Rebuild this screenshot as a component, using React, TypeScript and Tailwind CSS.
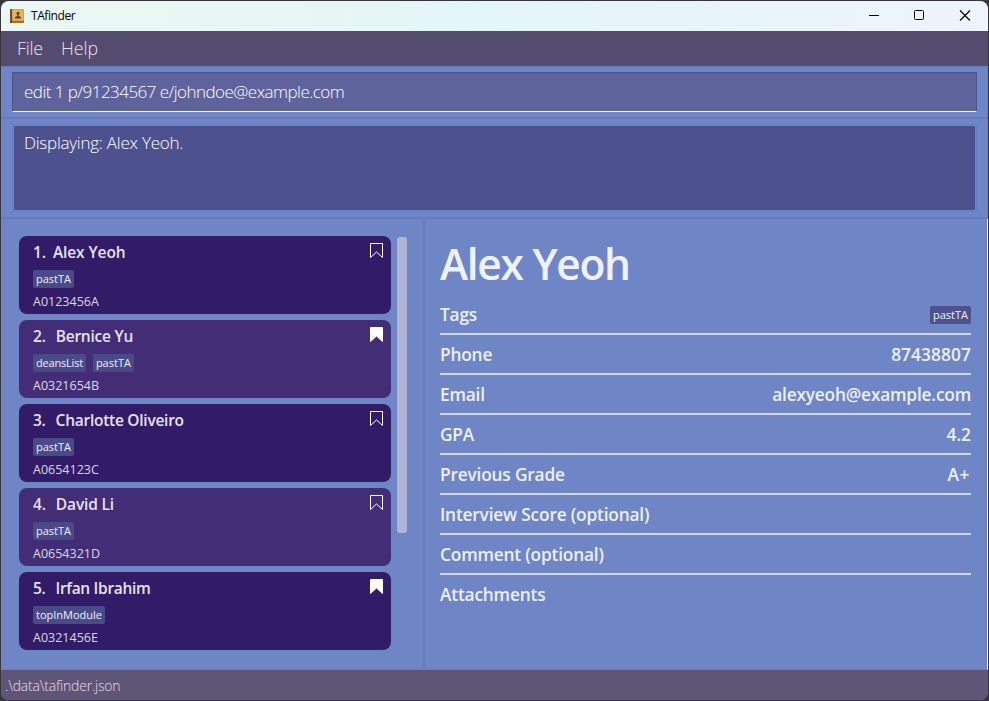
import type { ReactNode } from "react";

type Person = { name: string; tags: string[]; id: string; saved: boolean; spacing: string };

const people: Person[] = [
  { name: "Alex Yeoh", tags: ["pastTA"], id: "A0123456A", saved: false, spacing: "gap-[7px] tracking-[-0.1px]" },
  { name: "Bernice Yu", tags: ["deansList", "pastTA"], id: "A0321654B", saved: true, spacing: "gap-[10px] tracking-[-0.22px]" },
  { name: "Charlotte Oliveiro", tags: ["pastTA"], id: "A0654123C", saved: false, spacing: "gap-[10px] tracking-[-0.26px]" },
  { name: "David Li", tags: ["pastTA"], id: "A0654321D", saved: false, spacing: "gap-[10px] tracking-[-0.15px]" },
  { name: "Irfan Ibrahim", tags: ["topInModule"], id: "A0321456E", saved: true, spacing: "gap-[10px] tracking-[-0.3px]" },
];

function Tag({ children, className }: { children: ReactNode; className: string }) {
  return (
    <span className={`flex h-[18px] items-center rounded-[2px] px-[3px] pb-px text-[11px] leading-none text-[#f1eff7] ${className}`}>
      {children}
    </span>
  );
}

function Bookmark({ filled }: { filled: boolean }) {
  return (
    <svg width="14" height="16" viewBox="0 0 14 16" className="mt-[7px] mr-[7px] shrink-0">
      <path d="M0.5 0.5H12.5V14.5L6.5 9L0.5 14.5Z" fill={filled ? "white" : "none"} stroke="white" strokeWidth="1" />
    </svg>
  );
}

function Card({ person, index }: { person: Person; index: number }) {
  return (
    <div className={`flex h-[78px] w-[372px] shrink-0 justify-between rounded-[8px] pl-[14px] ${index % 2 ? "bg-[#432d76]" : "bg-[#321c67]"}`}>
      <div className="flex flex-col">
        <div className={`flex h-[34px] items-center whitespace-pre text-[15.5px] font-semibold leading-none text-[#e6e3ee] ${person.spacing}`}>
          <span>{index + 1}.</span>
          <span>{person.name}</span>
        </div>
        <div className="flex gap-[7px]">
          {person.tags.map((t) => (
            <Tag key={t} className={t === "deansList" ? "bg-[#484b88] tracking-[-0.2px]" : "bg-[#484b88]"}>{t}</Tag>
          ))}
        </div>
        <div className="mt-[6px] text-[12.5px] leading-[15px] text-[#dcd8e6]">{person.id}</div>
      </div>
      <Bookmark filled={person.saved} />
    </div>
  );
}

function Row({ label, children, last = false }: { label: string; children?: ReactNode; last?: boolean }) {
  return (
    <div className={`flex items-center justify-between pt-px text-[17.3px] font-semibold leading-none tracking-[-0.18px] text-[#edf0f9] ${last ? "h-[38px]" : "h-[40px] border-b-2 border-[#d5d8e0]"}`}>
      <span>{label}</span>
      {children}
    </div>
  );
}

export default function App() {
  return (
    <div className="h-[701px] w-[989px] overflow-hidden bg-[#38363c] p-px font-['Open_Sans','Noto_Sans',sans-serif]">
      <div className="flex h-[699px] w-[987px] flex-col overflow-hidden rounded-[8px] bg-[#6f86c6]">
        <header className="flex h-[30px] shrink-0 items-center bg-linear-to-r from-[#eaf8f0] via-[#e3f6f8] to-[#edf4fb] text-black">
          <svg width="14" height="14" viewBox="0 0 14 14" className="ml-[9px]">
            <rect width="14" height="14" rx="1" fill="#d79d43" />
            <rect width="2" height="14" fill="#65533d" />
            <rect x="3" y="1" width="10" height="10" fill="#e7b35d" />
            <rect x="2" y="12" width="12" height="2" fill="#aa6c22" />
            <circle cx="8" cy="4.3" r="1.5" fill="#59452d" />
            <path d="M7.3 5H8.7V7L11 8V9.5H5V8L7.3 7Z" fill="#59452d" />
          </svg>
          <span className="ml-[7px] text-[12px] tracking-[-0.42px]">TAfinder</span>
          <div className="ml-auto flex items-center">
            <svg width="12" height="12" viewBox="0 0 12 12" className="mr-[33px]"><path d="M1 5.5H11" stroke="black" /></svg>
            <svg width="12" height="12" viewBox="0 0 12 12" className="mr-[34px]"><rect x="1.5" y="0.5" width="9" height="9" rx="1" fill="none" stroke="black" /></svg>
            <svg width="12" height="12" viewBox="0 0 12 12" className="mr-[17px]"><path d="M1 0.5L11 10.5M11 0.5L1 10.5" stroke="black" strokeWidth="1.1" /></svg>
          </div>
        </header>
        <nav className="flex h-[35px] shrink-0 items-center gap-[18px] bg-[#544c6e] pl-[16px] text-[17.8px] font-light text-[#e5e3ea]">
          <span className="tracking-[-0.2px]">File</span>
          <span>Help</span>
        </nav>
        <section className="h-[53px] shrink-0 border-t border-r border-b-2 border-[#657cc0] pt-[5px] pr-[10px] pl-[11px]">
          <div className="flex h-[40px] items-center border border-x-[#4d528f] border-t-[#4d528f] border-b-white bg-[#5f639b] pl-[11px] text-[17px] font-light tracking-[-0.54px] text-white">
            <span>edit 1 p/91234567 e/johndoe@example.com</span>
          </div>
        </section>
        <section className="h-[100px] shrink-0 border-r border-b-2 border-[#657cc0] pt-[5px] pr-[10px] pl-[11px]">
          <div className="h-[88px] border border-[#657cc0] p-px">
            <div className="h-[84px] bg-[#4d528f] pt-[6px] pl-[10px] text-[17px] leading-[22px] font-light tracking-[-0.24px] text-white">
              <span>Displaying: Alex Yeoh.</span>
            </div>
          </div>
        </section>
        <main className="flex h-[451px] shrink-0 border-r border-b border-r-white border-b-[#657cc0]">
          <section className="flex w-[424px] shrink-0 border-r-2 border-[#657cc0] pt-[17px] pl-[18px]">
            <div className="flex flex-col gap-[6px]">
              {people.map((p, i) => (
                <Card key={p.id} person={p} index={i} />
              ))}
            </div>
            <div className="mt-px ml-[6px] h-[296px] w-[10px] rounded-[3px] bg-[#b1b4d4]" />
          </section>
          <section className="min-w-0 flex-1 border-r border-[#657cc0] pr-[15px] pl-[15px]">
            <h1 className="h-[76px] pt-[16px] text-[42.5px] leading-[58px] font-semibold tracking-[-1.3px] text-[#eff2fa]">
              <span>Alex Yeoh</span>
            </h1>
            <Row label="Tags">
              <Tag className="bg-[#4d528f] font-normal tracking-normal">pastTA</Tag>
            </Row>
            <Row label="Phone"><span className="tracking-[0.1px]">87438807</span></Row>
            <Row label="Email"><span>alexyeoh@example.com</span></Row>
            <Row label="GPA"><span className="tracking-normal">4.2</span></Row>
            <Row label="Previous Grade"><span className="mr-px tracking-[0.6px]">A+</span></Row>
            <Row label="Interview Score (optional)" />
            <Row label="Comment (optional)" />
            <Row label="Attachments" last />
          </section>
        </main>
        <footer className="flex h-[30px] shrink-0 items-center bg-[#5f5577] pl-[4px] text-[14px] font-light tracking-[-0.2px] text-[#e1dee7]">
          <span>.\data\tafinder.json</span>
        </footer>
      </div>
    </div>
  );
}
